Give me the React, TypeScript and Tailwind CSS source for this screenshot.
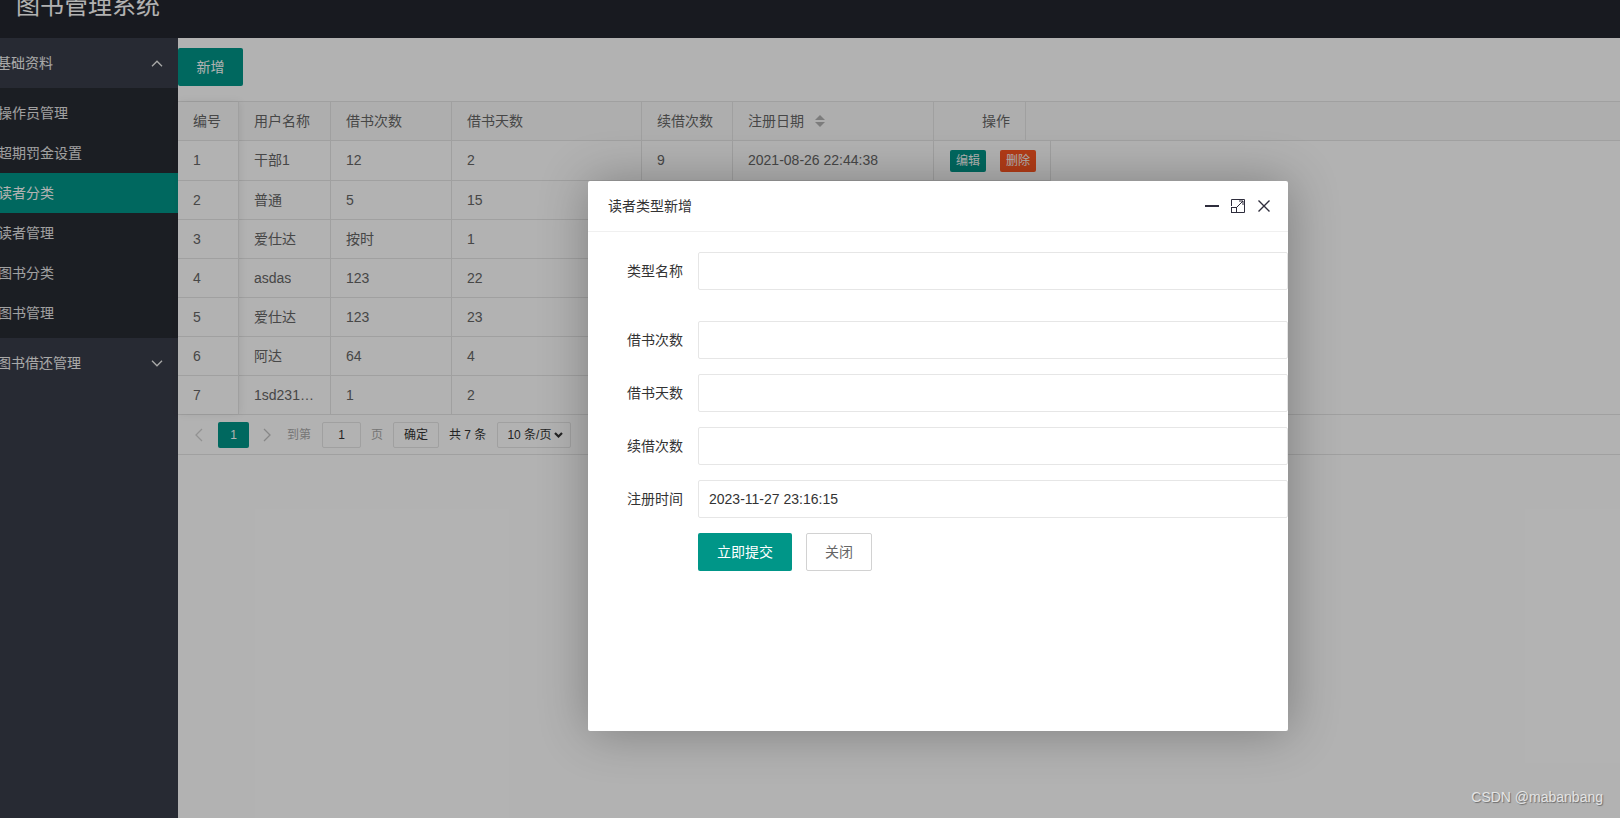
import React from 'react';

type ReaderType = {
  id: number;
  name: string;
  times: string;
  days: string;
  renew: string;
  date: string;
};

const rows: ReaderType[] = [
  { id: 1, name: '干部1', times: '12', days: '2', renew: '9', date: '2021-08-26 22:44:38' },
  { id: 2, name: '普通', times: '5', days: '15', renew: '3', date: '2021-08-26 22:45:12' },
  { id: 3, name: '爱仕达', times: '按时', days: '1', renew: '1', date: '2021-09-02 10:13:51' },
  { id: 4, name: 'asdas', times: '123', days: '22', renew: '2', date: '2021-09-02 10:20:05' },
  { id: 5, name: '爱仕达', times: '123', days: '23', renew: '3', date: '2021-09-03 16:41:27' },
  { id: 6, name: '阿达', times: '64', days: '4', renew: '5', date: '2023-11-20 21:08:44' },
  { id: 7, name: '1sd2312312', times: '1', days: '2', renew: '1', date: '2023-11-27 23:10:02' },
];

const menuItems = ['操作员管理', '超期罚金设置', '读者分类', '读者管理', '图书分类', '图书管理'];

function Chevron({ up }: { up?: boolean }) {
  return (
    <svg width="12" height="7" viewBox="0 0 12 7" fill="none" stroke="currentColor" strokeWidth="1.3">
      {up ? <polyline points="1,6.2 6,1.2 11,6.2" /> : <polyline points="1,0.8 6,5.8 11,0.8" />}
    </svg>
  );
}

function Sidebar() {
  return (
    <aside className="w-[178px] shrink-0 bg-[#393D49] text-[14px]">
      <div className="flex h-[50px] items-center justify-between pr-[15px] text-[#f2f2f2]">
        <span className="-ml-[3px]">基础资料</span>
        <Chevron up />
      </div>
      <div className="bg-[#282B33] py-[5px]">
        {menuItems.map((item) => (
          <div
            key={item}
            className={`flex h-[40px] items-center ${
              item === '读者分类' ? 'bg-[#009688] text-white' : 'text-[#e6e6e6]'
            }`}
          >
            <span className="-ml-[2px]">{item}</span>
          </div>
        ))}
      </div>
      <div className="flex h-[50px] items-center justify-between pr-[15px] text-[#f2f2f2]">
        <span className="-ml-[3px]">图书借还管理</span>
        <Chevron />
      </div>
    </aside>
  );
}

function SortIcon() {
  return (
    <svg width="10" height="12" viewBox="0 0 10 12" className="ml-[11px] text-[#b2b2b2]" fill="currentColor">
      <polygon points="5,0 10,5 0,5" />
      <polygon points="0,7 10,7 5,12" />
    </svg>
  );
}

function Pagination() {
  return (
    <div className="flex h-[40px] items-center border-t border-[#e6e6e6] pl-[10px] text-[12px]">
      <span className="flex w-[22px] justify-center text-[#d2d2d2]">
        <svg width="8" height="14" viewBox="0 0 8 14" fill="none" stroke="currentColor" strokeWidth="1.3">
          <polyline points="7,1 1,7 7,13" />
        </svg>
      </span>
      <span className="ml-[8px] flex h-[26px] w-[31px] items-center justify-center rounded-[2px] bg-[#009688] text-white">
        1
      </span>
      <span className="ml-[7px] flex w-[22px] justify-center text-[#c2c2c2]">
        <svg width="8" height="14" viewBox="0 0 8 14" fill="none" stroke="currentColor" strokeWidth="1.3">
          <polyline points="1,1 7,7 1,13" />
        </svg>
      </span>
      <span className="ml-[9px] text-[#aaa]">到第</span>
      <span className="ml-[11px] flex h-[26px] w-[39px] items-center justify-center rounded-[2px] border border-[#e6e6e6] text-[#333]">
        1
      </span>
      <span className="ml-[10px] text-[#aaa]">页</span>
      <span className="ml-[10px] flex h-[26px] w-[46px] items-center justify-center rounded-[2px] border border-[#e6e6e6] text-[#333]">
        确定
      </span>
      <span className="ml-[10px] text-[#333]">共 7 条</span>
      <span className="ml-[11px] flex h-[26px] w-[74px] items-center justify-between rounded-[2px] border border-[#e6e6e6] pl-[9px] pr-[7px] text-[#333]">
        10 条/页
        <svg width="9" height="6" viewBox="0 0 9 6" fill="none" stroke="currentColor" strokeWidth="2.2">
          <polyline points="1,1 4.5,4.5 8,1" />
        </svg>
      </span>
    </div>
  );
}

function ReaderTable() {
  const headCell = 'flex h-full items-center border-r border-[#e6e6e6] px-[15px]';
  return (
    <div className="mt-[15px] border-y border-[#e6e6e6] text-[14px] text-[#666]">
      <div className="flex">
        {/* fixed left column */}
        <div className="relative w-[61px] shrink-0 bg-white shadow-[1px_0_8px_rgba(0,0,0,0.08)]">
          <div className="flex h-[39px] items-center border-r border-b border-[#e6e6e6] bg-[#fafafa] pl-[15px]">
            编号
          </div>
          {rows.map((r, i) => (
            <div
              key={r.id}
              className={`flex h-[39px] items-center border-r border-[#e6e6e6] pl-[15px] ${i > 0 ? 'border-t' : ''}`}
            >
              {r.id}
            </div>
          ))}
        </div>

        <div className="min-w-0 flex-1">
          <div className="flex h-[39px] border-b border-[#e6e6e6] bg-[#fafafa]">
            <div className={`${headCell} w-[92px]`}>用户名称</div>
            <div className={`${headCell} w-[121px]`}>借书次数</div>
            <div className={`${headCell} w-[190px]`}>借书天数</div>
            <div className={`${headCell} w-[91px]`}>续借次数</div>
            <div className={`${headCell} w-[201px]`}>
              注册日期
              <SortIcon />
            </div>
            <div className="flex h-full w-[92px] items-center border-r border-[#e6e6e6] pl-[48px]">操作</div>
          </div>
          {rows.map((r, i) => (
            <div
              key={r.id}
              className={`flex h-[39px] w-[812px] border-[#e6e6e6] ${i > 0 ? 'border-t' : ''}`}
            >
              <div className={`${headCell} w-[92px]`}>
                <span className="truncate">{r.name}</span>
              </div>
              <div className={`${headCell} w-[121px]`}>{r.times}</div>
              <div className={`${headCell} w-[190px]`}>{r.days}</div>
              <div className={`${headCell} w-[91px]`}>{r.renew}</div>
              <div className={`${headCell} w-[201px]`}>{r.date}</div>
              <div className="flex h-full w-[117px] items-center gap-[14px] border-r border-[#e6e6e6] pl-[16px] text-[12px] text-white">
                <span className="flex h-[22px] items-center rounded-[2px] bg-[#009688] px-[6px]">编辑</span>
                <span className="flex h-[22px] items-center rounded-[2px] bg-[#FF5722] px-[6px]">删除</span>
              </div>
            </div>
          ))}
        </div>
      </div>
      <Pagination />
    </div>
  );
}

function FormRow({ label, value, className }: { label: string; value?: string; className: string }) {
  return (
    <div className={`flex ${className}`}>
      <label className="w-[110px] shrink-0 pr-[15px] text-right leading-[38px] text-[#333]">{label}</label>
      <div className="flex h-[38px] flex-1 items-center rounded-[2px] border border-[#e6e6e6] pl-[10px] text-[#333]">
        {value}
      </div>
    </div>
  );
}

function AddModal() {
  return (
    <div className="absolute left-[588px] top-[181px] z-30 h-[550px] w-[700px] overflow-hidden rounded-[2px] bg-white text-[14px] shadow-[1px_1px_50px_rgba(0,0,0,0.3)]">
      <div className="flex h-[51px] items-center border-b border-[#f0f0f0] pl-[20px] pr-[18px] text-[#333]">
        <span>读者类型新增</span>
        <div className="ml-auto flex items-center text-[#2E2D3C]">
          <span className="h-[2px] w-[14px] bg-current" />
          <svg width="14" height="14" viewBox="0 0 14 14" fill="none" stroke="currentColor" strokeWidth="1" className="ml-[12px]">
            <path d="M0.5 7 V0.5 H13.5 V13.5 H6" />
            <rect x="0.5" y="8.5" width="5" height="5" />
            <path d="M5.5 8.5 L12 2 M8 2 H12 V6" />
          </svg>
          <svg width="12" height="12" viewBox="0 0 12 12" fill="none" stroke="currentColor" strokeWidth="1.4" className="ml-[13px]">
            <path d="M0.5 0.5 L11.5 11.5 M11.5 0.5 L0.5 11.5" />
          </svg>
        </div>
      </div>

      <div className="pt-[20px]">
        <FormRow label="类型名称" className="mb-[31px]" />
        <FormRow label="借书次数" className="mb-[15px]" />
        <FormRow label="借书天数" className="mb-[15px]" />
        <FormRow label="续借次数" className="mb-[15px]" />
        <FormRow label="注册时间" value="2023-11-27 23:16:15" className="mb-[15px]" />
        <div className="flex pl-[110px]">
          <button className="h-[38px] w-[94px] rounded-[2px] bg-[#009688] text-white">立即提交</button>
          <button className="ml-[14px] h-[38px] w-[66px] rounded-[2px] border border-[#d2d2d2] bg-white text-[#666]">
            关闭
          </button>
        </div>
      </div>
    </div>
  );
}

export default function App() {
  return (
    <div className="relative h-[818px] w-[1620px] overflow-hidden bg-white font-['Liberation_Sans','Noto_Sans_CJK_SC',sans-serif]">
      <header className="h-[38px] overflow-hidden bg-[#23262E]">
        <div className="-mt-[6px] pl-[16px] text-[24px] leading-[24px] text-white">图书管理系统</div>
      </header>

      <div className="flex h-[780px]">
        <Sidebar />
        <main className="min-w-0 flex-1 bg-white pt-[10px]">
          <button className="h-[38px] w-[65px] rounded-[2px] bg-[#009688] text-[14px] text-white">新增</button>
          <ReaderTable />
        </main>
      </div>

      {/* layer shade */}
      <div className="absolute inset-0 z-20 bg-black/30" />

      <AddModal />

      <div className="absolute bottom-[10px] right-[17px] z-40 text-[14px] text-[#e4e4e4] [text-shadow:1px_1px_1px_rgba(0,0,0,0.4)]">
        CSDN @mabanbang
      </div>
    </div>
  );
}
